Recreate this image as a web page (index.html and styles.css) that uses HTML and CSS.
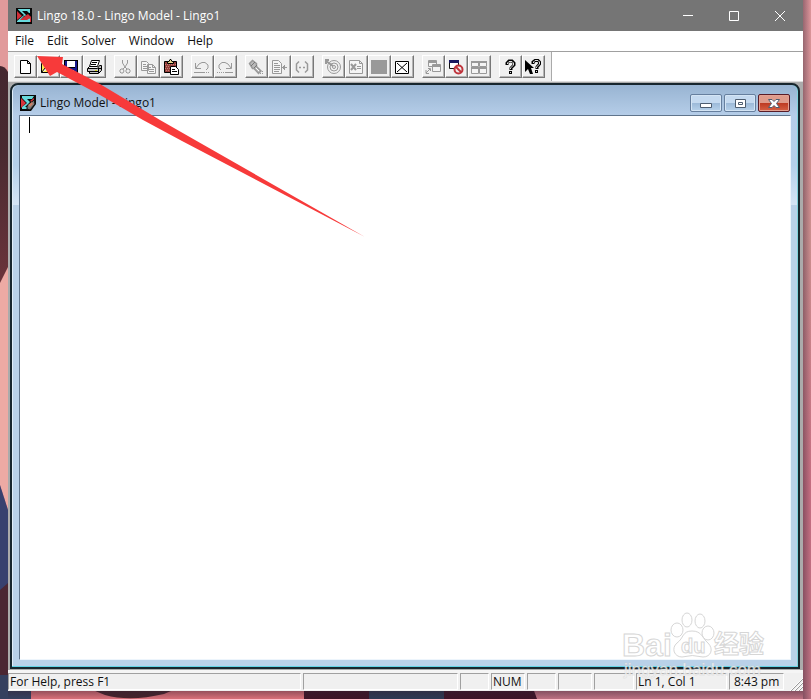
FILE: index.html
```html
<!DOCTYPE html>
<html lang="en">
<head>
<meta charset="utf-8">
<title>Lingo 18.0 - Lingo Model - Lingo1</title>
<link rel="stylesheet" href="styles.css">
</head>
<body>
<svg class="wallpaper" viewBox="0 0 811 699" preserveAspectRatio="none" aria-hidden="true">
  <defs>
    <linearGradient id="wallRight" x1="0" y1="0" x2="0" y2="1"><stop offset="0" stop-color="#df969c"/><stop offset=".35" stop-color="#ce9090"/><stop offset=".7" stop-color="#c76f82"/><stop offset="1" stop-color="#bd7182"/></linearGradient>
    <linearGradient id="wallEdge" x1="0" y1="0" x2="1" y2="0"><stop offset="0" stop-color="#302030" stop-opacity=".4"/><stop offset="1" stop-color="#302030" stop-opacity="0"/></linearGradient>
    <linearGradient id="wallFoot" x1="0" y1="0" x2="0" y2="1"><stop offset="0" stop-color="#302030" stop-opacity=".4"/><stop offset="1" stop-color="#302030" stop-opacity="0"/></linearGradient>
    <linearGradient id="wallDark" x1="0" y1="0" x2="0" y2="1"><stop offset="0" stop-color="#43262f"/><stop offset=".4" stop-color="#4a2a30"/><stop offset="1" stop-color="#6b343b"/></linearGradient>
  </defs>
  <path fill="url(#wallRight)" d="M0 0H811V699H0z"/>
  <path fill="#e19a9b" d="M0 0H8V72H0z"/>
  <path fill="url(#wallDark)" d="M0 66Q5 66 8 72V283H0z"/>
  <path fill="#edaaa4" d="M0 283L8 267V510L0 485z"/>
  <path fill="#38416f" d="M0 485L8 510V590H0z"/>
  <path fill="#4b2733" d="M0 590L8 583V680H0z"/>
  <path fill="#35405f" d="M0 675H31V699H0z"/>
  <path fill="#d96f78" d="M31 688H306V699H31z"/>
  <path fill="#46242c" d="M88 688H178L164 694Q130 702 105 695z"/>
  <path fill="#3e1527" d="M304 688H371V699H304z"/>
  <path fill="#2d3953" d="M369 688H447V699H369z"/>
  <path fill="#3d1529" d="M444 688H533L537 699H444z"/>
  <path fill="url(#wallEdge)" d="M803 0H811V699H803z"/>
  <path fill="url(#wallFoot)" d="M8 691H803V699H8z"/>
</svg>

<svg class="symbols" aria-hidden="true">
  <symbol id="logo" viewBox="0 0 16 16"><path fill="#080808" d="M0 0H16V16H0z"/><path fill="#d12f38" d="M1 3L6 8L1 12zM1 14L9 8L12 6L15 9V14z"/><path fill="#68dadd" d="M2 1H14V5H13L11 3H6L10 7L9 8L2 1.500zM9 7L4 12H11L14 10V14H1V13L8 7z"/><path fill="#d12f38" d="M8 10L12 7L15 9V11L12 10L9 12z"/></symbol>
  <symbol id="childlogo" viewBox="0 0 16 16"><path fill="#080808" d="M0 0H16V9L11 16H0z"/><path fill="#d8343b" d="M1 3L6 8L1 13zM10 6L14 3V8z"/><path fill="#69d9db" d="M2 1H14L12 4H7L10 7L5 12H9L7 14H2V12L7 8L2 3z"/><path fill="#777" stroke="#111" d="M7 11L14 5L15 9L10 15L7 14z"/><path fill="#c78068" d="M8 10L12 7L13 9L10 12z"/></symbol>
  <symbol id="new" viewBox="0 0 16 16"><path fill="#fff" stroke="#000" d="M3.500 1.500H10.500L13.500 4.500V14.500H3.500zM10.500 1.500V4.500H13.500"/></symbol>
  <symbol id="open" viewBox="0 0 16 16"><path fill="#ffe94d" stroke="#000" d="M1.500 13.500V4.500H5.500L7.500 6.500H12.500V8.500H5.500L1.500 13.500H11.500L15.500 8.500H12"/><path fill="none" stroke="#000" d="M9 3.500H12L14 5.500M14.500 2V6H11"/></symbol>
  <symbol id="save" viewBox="0 0 16 16"><path d="M1 1H15V15H2L1 14z"/><path fill="#19198c" d="M2 2H4V9H12V2H14V14H2z"/><path fill="#fff" d="M4 2H12V8H4zM5 11H11V14H5z"/><path d="M6 11H8V14H6z"/></symbol>
  <symbol id="print" viewBox="0 0 16 16"><path fill="#fff" stroke="#000" d="M5.500 1.500H13.500L11.500 7.500H3.500z"/><path stroke="#000" d="M6 3.500H11M5 5.500H10"/><path fill="#c4c4c4" stroke="#000" d="M3.500 7.500L1.500 9.500V12.500H3.500V14.500H12.500L15.500 11.500V6.500H13.500L11.500 9.500H2"/><path stroke="#000" d="M3 12.500H12M12.500 9V14M13 9.500H15"/><path fill="#d8da25" d="M9 11H11V12H9z"/></symbol>
  <symbol id="cut" viewBox="0 0 16 16"><path fill="none" stroke="currentColor" d="M5.500 1V4L8 8L6 10M10.500 1V4L8 8L10 10M6 10L7 12L6 14H4L3 13V11L4 10zM10 10H12L13 11V13L12 14H10L9 13V11z"/></symbol>
  <symbol id="copy" viewBox="0 0 16 16"><path fill="#f5f5f5" stroke="currentColor" d="M1.500 2.500H6.500L8.500 4.500V11.500H1.500zM7.500 5.500H12.500L15.500 8.500V14.500H7.500zM12.500 5.500V8.500H15.500"/><path stroke="currentColor" d="M3 5.500H6M3 7.500H7M3 9.500H7M9 8.500H11M9 10.500H14M9 12.500H14"/></symbol>
  <symbol id="paste" viewBox="0 0 16 16"><path fill="#973f3b" stroke="#000" d="M1.500 2.500H13.500V13.500H1.500z"/><path stroke="#c38178" stroke-dasharray="1 1" d="M2 5.500H13M3 7.500H13M2 9.500H7M3 11.500H7"/><path fill="#e9d98e" stroke="#000" d="M4.500 4.500V2.500H6L7 .500H8L9 2.500H10.500V4.500z"/><path fill="#fff" stroke="#000" d="M7.500 7.500H12.500L15.500 10.500V15.500H7.500z"/><path stroke="#000" d="M9 10.500H12M9 12.500H14"/></symbol>
  <symbol id="undo" viewBox="0 0 16 16"><path fill="none" stroke="currentColor" d="M1.500 4V9.500H7M2 9L5 5L8 3.500H11L14 6V9L12 11M0 13.500H10"/><path stroke="currentColor" stroke-dasharray="1 1" d="M10 13.500H16"/></symbol>
  <symbol id="redo" viewBox="0 0 16 16"><path fill="none" stroke="currentColor" d="M14.500 4V9.500H9M14 9L11 5L8 3.500H5L2 6V9L4 11M8 13.500H16"/><path stroke="currentColor" stroke-dasharray="1 1" d="M0 13.500H8"/></symbol>
  <symbol id="find" viewBox="0 0 16 16"><path fill="#bbb" stroke="currentColor" stroke-width="1.500" d="M1.500 4.500L4.500 1.500L8.500 4.500V7.500L13 12L10.500 14.500L6 9.500H4.500z"/><path stroke="#777" d="M3 7L7 3M6 9L9 6"/><path stroke="#fff" d="M8 9L11 12"/><path stroke="currentColor" stroke-dasharray="1 1" d="M12 14.500H16M14 12.500H16"/></symbol>
  <symbol id="goto" viewBox="0 0 16 16"><path fill="#f5f5f5" stroke="currentColor" d="M1.500 1.500H7.500L10.500 4.500V14.500H1.500z"/><path stroke="currentColor" d="M3 4.500H7M3 6.500H9M3 8.500H9M3 10.500H9M3 12.500H8M11 8.500H16M13.500 6V11M12.500 7V10"/></symbol>
  <symbol id="match" viewBox="0 0 16 16"><path fill="none" stroke="currentColor" stroke-width="1.500" d="M5 2.500L2.500 5V11L5 13.500M11 2.500L13.500 5V11L11 13.500M5 8.500H7M9 8.500H11"/></symbol>
  <symbol id="solve" viewBox="0 0 16 16"><g fill="none" stroke="currentColor"><circle cx="9" cy="8" r="6.500"/><circle cx="9" cy="8" r="4"/><circle cx="9" cy="8" r="1.500"/><path stroke-width="2" d="M1 2L8 7M1 5V1H4"/></g></symbol>
  <symbol id="solution" viewBox="0 0 16 16"><path fill="#f5f5f5" stroke="currentColor" d="M1.500 1.500H11.500L14.500 4.500V14.500H1.500zM11.500 1.500V4.500H14.500"/><path stroke="currentColor" stroke-width="2" d="M3 5L8 11M8 5L3 11"/><path stroke="currentColor" d="M9 7.500H13M9 9.500H13"/></symbol>
  <symbol id="stop" viewBox="0 0 16 16"><path fill="#999" d="M0 1H16V15H0z"/></symbol>
  <symbol id="matrix" viewBox="0 0 16 16"><path fill="#fff" stroke="#000" d="M1.500 2.500H14.500V14.500H1.500zM3 4L13 13M13 4L3 13"/></symbol>
  <symbol id="send" viewBox="0 0 16 16"><path fill="#f4f4f4" stroke="currentColor" d="M3.500 1.500H11.500V7.500H3.500zM7.500 5.500H15.500V12.500H7.500z"/><path stroke="currentColor" stroke-width="2" d="M3 3H12M7 7H16"/><path fill="none" stroke="currentColor" d="M1 11V14.500H4M1 14L5 10M3 9.500H5.500V12"/></symbol>
  <symbol id="closeall" viewBox="0 0 16 16"><path fill="#fff" stroke="#111" d="M1.500 2.500H10.500V9.500H1.500z"/><path fill="#17175f" d="M1 1H11V4H1z"/><circle cx="10.500" cy="10.500" r="4" fill="#eee" stroke="#bf343c" stroke-width="2"/><path stroke="#bf343c" stroke-width="2" d="M8 8L13 13"/></symbol>
  <symbol id="tile" viewBox="0 0 16 16"><path fill="#f4f4f4" stroke="currentColor" d="M.500 2.500H7.500V7.500H.500zM8.500 2.500H15.500V7.500H8.500zM.500 9.500H7.500V14.500H.500zM8.500 9.500H15.500V14.500H8.500z"/><path stroke="currentColor" stroke-width="2" d="M0 3H16M0 9H16"/></symbol>
  <symbol id="help" viewBox="0 0 16 16"><path fill="none" stroke="#000" stroke-width="3" d="M5 6V4L7 2H10L12 4V6L9 9V11M8.500 12V15"/><path fill="none" stroke="#ddd" d="M5.500 5V4L7 2.500H10L11.500 4V6L8.500 9V10M8.500 13V14"/></symbol>
  <symbol id="context" viewBox="0 0 16 16"><path d="M0 1V13L3 10L5 15H8L6 9H9z"/><path fill="none" stroke="#000" stroke-width="3" d="M8 5V3L10 1.500H13L14.500 3V5L12 8V10M11.500 11V14"/><path fill="none" stroke="#ddd" d="M8.500 4V3L10 1.500H13L14.500 3V5L11.500 8V9M11.500 12V13"/></symbol>
</svg>

<main class="app">
  <header class="titlebar">
    <svg class="icon"><use href="#logo"/></svg>
    <h1 class="title">Lingo 18.0 - Lingo Model - Lingo1</h1>
    <button class="caption" aria-label="Minimize"><svg viewBox="0 0 12 12"><path d="M1 5.500H11"/></svg></button>
    <button class="caption" aria-label="Maximize"><svg viewBox="0 0 12 12"><path d="M1.500 1.500H10.500V10.500H1.500z"/></svg></button>
    <button class="caption" aria-label="Close"><svg viewBox="0 0 12 12"><path d="M1 1L11 11M11 1L1 11"/></svg></button>
  </header>
  <nav class="menu"><button>File</button><button>Edit</button><button>Solver</button><button>Window</button><button>Help</button></nav>
  <div class="toolrow">
    <div class="toolbar" role="toolbar" aria-label="Standard">
      <div class="group"><button aria-label="New"><svg class="icon"><use href="#new"/></svg></button><button aria-label="Open"><svg class="icon"><use href="#open"/></svg></button><button aria-label="Save"><svg class="icon"><use href="#save"/></svg></button><button aria-label="Print"><svg class="icon"><use href="#print"/></svg></button></div>
      <div class="group"><button disabled aria-label="Cut"><svg class="icon"><use href="#cut"/></svg></button><button disabled aria-label="Copy"><svg class="icon"><use href="#copy"/></svg></button><button aria-label="Paste"><svg class="icon"><use href="#paste"/></svg></button></div>
      <div class="group"><button disabled aria-label="Undo"><svg class="icon"><use href="#undo"/></svg></button><button disabled aria-label="Redo"><svg class="icon"><use href="#redo"/></svg></button></div>
      <div class="group"><button disabled aria-label="Find"><svg class="icon"><use href="#find"/></svg></button><button disabled aria-label="Go to line"><svg class="icon"><use href="#goto"/></svg></button><button disabled aria-label="Match parenthesis"><svg class="icon"><use href="#match"/></svg></button></div>
      <div class="group"><button disabled aria-label="Solve"><svg class="icon"><use href="#solve"/></svg></button><button disabled aria-label="Solution"><svg class="icon"><use href="#solution"/></svg></button><button disabled aria-label="Stop"><svg class="icon"><use href="#stop"/></svg></button><button aria-label="Matrix picture"><svg class="icon"><use href="#matrix"/></svg></button></div>
      <div class="group"><button disabled aria-label="Send to back"><svg class="icon"><use href="#send"/></svg></button><button aria-label="Close all"><svg class="icon"><use href="#closeall"/></svg></button><button disabled aria-label="Tile"><svg class="icon"><use href="#tile"/></svg></button></div>
      <div class="group"><button aria-label="Help topics"><svg class="icon"><use href="#help"/></svg></button><button aria-label="Context help"><svg class="icon"><use href="#context"/></svg></button></div>
    </div>
  </div>
  <section class="workspace">
    <article class="child">
      <header class="childbar">
        <svg class="icon"><use href="#childlogo"/></svg>
        <label class="title" for="model">Lingo Model - Lingo1</label>
        <div class="controls">
          <button aria-label="Minimize model"><svg viewBox="0 0 14 12"><path d="M1.500 6.500H12.500V10.500H1.500z"/></svg></button>
          <button aria-label="Restore model"><svg viewBox="0 0 14 12"><path d="M2.500 2.500H12.500V10.500H2.500zM5.500 5.500H9.500V7.500H5.500z"/></svg></button>
          <button class="close" aria-label="Close model"><svg viewBox="0 0 14 12"><path d="M1.500 2.500H5L7 4.500L9 2.500H12.500L9.500 6.500L12.500 10.500H9L7 8.500L5 10.500H1.500L4.500 6.500z"/></svg></button>
        </div>
      </header>
      <div class="editor"><textarea id="model" spellcheck="false"></textarea><i class="caret"></i></div>
    </article>
  </section>
  <footer class="status">
    <span>For Help, press F1</span><span></span><span></span><span>NUM</span><span></span><span></span><span></span><span>Ln 1, Col 1</span><span class="clock">8:43 pm</span>
    <svg class="grip" viewBox="0 0 14 14"><path stroke="#fff" d="M1 14L14 1M5 14L14 5M9 14L14 9"/><path stroke="#999" d="M2 14L14 2M6 14L14 6M10 14L14 10"/></svg>
  </footer>
</main>

<svg class="arrow" viewBox="0 0 330 184" aria-hidden="true"><path fill="#f73a3a" d="M0 1L26 2L25 9L63 29L123 65L158 85L328 182L145 86L106 65L63 40L20 17L13 21z"/></svg>
<svg class="watermark" viewBox="0 0 148 72">
  <g class="mark"><text class="latin" x="2" y="47">Bai</text><ellipse cx="57" cy="21" rx="6" ry="7"/><ellipse cx="67" cy="11" rx="5" ry="7"/><ellipse cx="80" cy="12" rx="5" ry="7"/><ellipse cx="88" cy="24" rx="6" ry="7"/><path d="M72 22C62 22 64 29 57 34C51 39 54 48 62 48Q72 45 83 48C91 48 94 40 88 34C82 29 82 22 72 22z"/><text class="du" x="61" y="44">du</text><text class="han" x="94" y="44">经验</text></g>
  <text class="site" x="4" y="66">jingyan.baidu.com</text>
</svg>
</body>
</html>
```
FILE: styles.css
```css
* { box-sizing: border-box; }
body { margin: 0; overflow: hidden; color: #111; font: 12px/16px "Open Sans", "Noto Sans", sans-serif; }
button { padding: 0; border: 0; color: inherit; background: none; font: inherit; }
.wallpaper { position: absolute; inset: 0; width: 100%; height: 100%; z-index: -1; }
.symbols { position: absolute; width: 0; height: 0; }
.icon { display: block; width: 16px; height: 16px; flex: none; }
.app { display: flex; flex-direction: column; height: calc(100vh - 8px); margin: 0 8px; background: #f0f0f0; }
.titlebar { display: flex; align-items: center; height: 31px; padding-left: 8px; color: #fff; background: #757575; }
.title { flex: 1; margin: 0; padding-left: 5px; font-size: 12px; font-weight: 400; white-space: nowrap; }
.caption { display: grid; place-items: center; width: 46px; height: 31px; }
.caption svg { width: 12px; height: 12px; fill: none; stroke: #fff; }
.menu { display: flex; gap: 13px; height: 21px; padding: 0 7px; background: #fff; border-bottom: 1px solid #a0a0a0; }
.toolrow { height: 29px; background: #fff; }
.toolbar { display: flex; gap: 8px; width: 544px; height: 29px; padding: 3px 6px; background: #f0f0f0; border-right: 1px solid #aaa; }
.group { display: flex; }
.toolbar button { display: grid; place-items: center start; width: 23px; height: 23px; padding-left: 2px; background: #f0f0f0; border: 1px solid; border-color: #fff #777 #777 #fff; box-shadow: inset -1px -1px #b4b4b4; }
.toolbar button:disabled { color: #999; }
.workspace { flex: 1; min-height: 0; padding: 1px 3px 4px 2px; background: #ababab; border-top: 1px solid #ddd; box-shadow: inset 0 -3px #f5f5f5; }
.child { display: flex; flex-direction: column; height: 100%; padding: 0 7px 7px; background: linear-gradient(#98b4d2, #b5cde8 30px, #b4d0ea 80px, #d5e5f5 120px, #b9d1e8 120px); border: 2px solid #17262d; border-radius: 8px 8px 0 0; box-shadow: inset 0 -1px #62d2e4, inset -1px 0 #80d3dc, inset 1px 0 #e0edf8; }
.childbar { display: flex; align-items: center; height: 30px; padding: 5px 1px 0; flex: none; }
.childbar .title { padding-left: 4px; }
.controls { display: flex; gap: 2px; }
.controls button { display: grid; place-items: center; width: 32px; height: 18px; background: linear-gradient(#c5daf0 50%, #9bb9d8 50%, #b7d2eb); border: 1px solid #667f9e; border-radius: 2px; box-shadow: inset 0 0 0 1px #d4e5f5; }
.controls svg { width: 14px; height: 12px; fill: #fff; stroke: #4d5d70; }
.controls .close { background: linear-gradient(#df9b8b 50%, #bd3921 50%, #d66145); border-color: #591c27; box-shadow: inset 0 0 0 1px #e4a293; }
.editor { position: relative; flex: 1; min-height: 0; border: 1px solid; border-color: #60758c #edf5fc #edf5fc #60758c; }
.editor textarea { display: block; width: 100%; height: 100%; padding: 1px 10px; resize: none; border: 0; outline: 0; background: #fff; font: 13px/16px "Liberation Mono", monospace; }
.caret { position: absolute; top: 1px; left: 9px; width: 1px; height: 16px; background: #000; }
.status { display: grid; grid-template-columns: minmax(0, 1fr) 155px 29px 34px 29px 34px 40px 91px 55px 17px; gap: 2px; height: 18px; white-space: nowrap; }
.status span { height: 17px; padding-left: 1px; border: 1px solid; border-color: #a0a0a0 #fff #fff #a0a0a0; }
.status .clock { padding-left: 4px; }
.grip { width: 14px; height: 14px; align-self: end; justify-self: end; }
.arrow { position: absolute; top: 55px; left: 37px; width: 330px; height: 184px; pointer-events: none; }
.watermark { position: absolute; right: 43px; bottom: 18px; width: 148px; height: 72px; pointer-events: none; }
.mark { fill: #fff; stroke: #d6d6d6; stroke-width: 1px; }
.latin { font: bold 32px "Liberation Sans", sans-serif; }
.du { font: bold 20px "Liberation Sans", sans-serif; }
.han { font: bold 25px "Noto Sans CJK SC", sans-serif; }
.site { fill: #fff; fill-opacity: .8; stroke: #ccc; stroke-opacity: .4; font: 17px "Liberation Sans", sans-serif; }
```
